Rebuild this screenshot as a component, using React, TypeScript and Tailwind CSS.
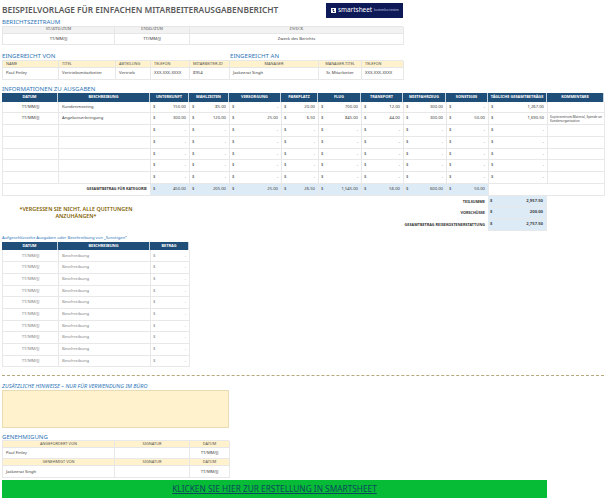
const labelCls = "text-[6.1px] leading-none text-[#2e75b6]"

const expenseCols = "grid-cols-[56px_92px_39px_40px_52px_37px_43px_42px_43px_42px_59px_57px]"

const expenseHead = [
  "DATUM",
  "BESCHREIBUNG",
  "UNTERKUNFT",
  "MAHLZEITEN",
  "VERSORGUNG",
  "PARKPLATZ",
  "FLUG",
  "TRANSPORT",
  "MIETFAHRZEUG",
  "SONSTIGES",
  "TÄGLICHE GESAMTBETRÄGE",
  "KOMMENTARE",
]

const expenseRows = [
  { date: "TT/MM/JJ", desc: "Kundenmeeting", vals: ["150.00", "85.00", "-", "20.00", "700.00", "12.00", "300.00", "-", "1,267.00"], note: "" },
  { date: "TT/MM/JJ", desc: "Angebotserbringung", vals: ["300.00", "120.00", "25.00", "6.50", "845.00", "44.00", "300.00", "50.00", "1,690.50"], note: "Kopierzentrum-Material, Spende an Kundenorganisation" },
  { date: "", desc: "", vals: ["-", "-", "-", "-", "-", "-", "-", "-", "-"], note: "" },
  { date: "", desc: "", vals: ["-", "-", "-", "-", "-", "-", "-", "-", "-"], note: "" },
  { date: "", desc: "", vals: ["-", "-", "-", "-", "-", "-", "-", "-", "-"], note: "" },
  { date: "", desc: "", vals: ["-", "-", "-", "-", "-", "-", "-", "-", "-"], note: "" },
  { date: "", desc: "", vals: ["-", "-", "-", "-", "-", "-", "-", "-", "-"], note: "" },
]

const categoryTotals = ["450.00", "205.00", "25.00", "26.50", "1,545.00", "56.00", "600.00", "50.00"]

const summary = [
  { label: "TEILSUMME", value: "2,957.50" },
  { label: "VORSCHÜSSE", value: "200.00" },
  { label: "GESAMTBETRAG REISEKOSTENERSTATTUNG", value: "2,757.50" },
]

function Money({ value, bold, tone }: { value: string; bold?: boolean; tone?: string }) {
  return (
    <div className={`flex items-center justify-between px-[2px] h-full border-r border-b border-[#e8e8e8] text-[4.2px] ${tone ?? ""} ${bold ? "font-bold" : ""}`}>
      <span>$</span>
      <span className="pr-[1px]">{value}</span>
    </div>
  )
}

function Title({ children, className }: { children: React.ReactNode; className?: string }) {
  return <div className={`${labelCls} ${className ?? ""}`}>{children}</div>
}

function HeadCell({ children, tone, align }: { children?: React.ReactNode; tone: string; align?: string }) {
  return (
    <div className={`flex items-center ${align ?? "justify-center"} h-full px-[3px] border-r border-b border-[#e6e6e6] text-[3.9px] text-[#555] whitespace-nowrap ${tone}`}>
      {children}
    </div>
  )
}

function BodyCell({ children, align }: { children?: React.ReactNode; align?: string }) {
  return (
    <div className={`flex items-center ${align ?? "justify-start"} h-full px-[3px] border-r border-b border-[#e8e8e8] text-[4.2px] text-[#404040] whitespace-nowrap`}>
      {children}
    </div>
  )
}

export default function App() {
  return (
    <div className="w-[608px] h-[502px] bg-white overflow-hidden font-['Noto_Sans','Open_Sans',sans-serif] text-[#404040]">
      <div className="pl-[2px] w-[604px]">
        <div className="flex items-start h-[19px]">
          <h1 className="w-[324px] pt-[5px] text-[8.35px] leading-[10px] font-semibold text-[#595959] whitespace-nowrap">
            BEISPIELVORLAGE FÜR EINFACHEN MITARBEITERAUSGABENBERICHT
          </h1>
          <div className="mt-[3px] flex items-center gap-[2px] w-[77px] h-[14.5px] pl-[5px] bg-[#0e1a58] text-white">
            <svg width="5" height="5" viewBox="0 0 5 5" className="shrink-0">
              <rect width="5" height="5" fill="#ffffff" />
              <path d="M1.5 1h1.5v1.5H1.5zM2 3h1.5v1H2z" fill="#0e1a58" />
            </svg>
            <span className="text-[6.4px] leading-none">smartsheet</span>
            <span className="text-[3.2px] leading-none text-[#c8cce0] whitespace-nowrap">kostenlos testen</span>
          </div>
        </div>

        <Title className="h-[7px]">BERICHTSZEITRAUM</Title>
        <div className="w-[401px] grid grid-cols-[112px_75px_214px] grid-rows-[6.5px_11.5px] border-l border-t border-[#e6e6e6]">
          <HeadCell tone="bg-[#f2f2f2] font-['Liberation_Serif',serif]">STARTDATUM</HeadCell>
          <HeadCell tone="bg-[#f2f2f2] font-['Liberation_Serif',serif]">ENDDATUM</HeadCell>
          <HeadCell tone="bg-[#f2f2f2] font-['Liberation_Serif',serif]">ZWECK</HeadCell>
          <BodyCell align="justify-center">TT/MM/JJ</BodyCell>
          <BodyCell align="justify-center">TT/MM/JJ</BodyCell>
          <BodyCell align="justify-center">Zweck des Berichts</BodyCell>
        </div>

        <div className="flex mt-[8px] h-[7px]">
          <Title className="w-[228px]">EINGEREICHT VON</Title>
          <Title>EINGEREICHT AN</Title>
        </div>
        <div className="w-[401px] grid grid-cols-[56px_57px_35px_39px_40px_89px_43px_42px] grid-rows-[6.5px_12px] border-l border-t border-[#e8e8e8]">
          <HeadCell tone="bg-[#fff2cc]" align="justify-start">NAME</HeadCell>
          <HeadCell tone="bg-[#fff2cc]" align="justify-start">TITEL</HeadCell>
          <HeadCell tone="bg-[#fff2cc]" align="justify-start">ABTEILUNG</HeadCell>
          <HeadCell tone="bg-[#fff2cc]" align="justify-start">TELEFON</HeadCell>
          <HeadCell tone="bg-[#fff2cc]" align="justify-start">MITARBEITER-ID</HeadCell>
          <HeadCell tone="bg-[#fff2cc]">MANAGER</HeadCell>
          <HeadCell tone="bg-[#fff2cc]">MANAGER-TITEL</HeadCell>
          <HeadCell tone="bg-[#fff2cc]" align="justify-start">TELEFON</HeadCell>
          <BodyCell>Paul Finley</BodyCell>
          <BodyCell>Vertriebsmitarbeiter</BodyCell>
          <BodyCell>Vertrieb</BodyCell>
          <BodyCell>XXX-XXX-XXXX</BodyCell>
          <BodyCell>8954</BodyCell>
          <BodyCell>Jaskeerat Singh</BodyCell>
          <BodyCell align="justify-center">Sr. Mitarbeiter</BodyCell>
          <BodyCell>XXX-XXX-XXXX</BodyCell>
        </div>

        <Title className="mt-[6.5px] h-[6.5px]">INFORMATIONEN ZU AUSGABEN</Title>
        <div className={`grid ${expenseCols} h-[9px]`}>
          {expenseHead.map((h) => (
            <div key={h} className="flex items-center justify-center bg-[#1f4e78] border-r border-[#c5d3e0] text-[3.9px] font-bold text-white whitespace-nowrap">
              {h}
            </div>
          ))}
        </div>
        {expenseRows.map((row, i) => (
          <div key={i} className={`grid ${expenseCols} h-[11.75px] border-l border-[#e8e8e8]`}>
            <BodyCell align="justify-center">{row.date}</BodyCell>
            <BodyCell>{row.desc}</BodyCell>
            {row.vals.map((v, j) => (
              <Money key={j} value={v} />
            ))}
            <div className="flex items-center h-full px-[2px] border-r border-b border-[#e8e8e8] text-[3.1px] leading-[4px]">
              {row.note}
            </div>
          </div>
        ))}
        <div className={`grid ${expenseCols} h-[11.75px] border-l border-[#e8e8e8]`}>
          <div className="col-span-2 flex items-center justify-end h-full pr-[3px] border-r border-b border-[#e8e8e8] text-[3.8px] font-bold text-[#333]">
            GESAMTBETRAG FÜR KATEGORIE
          </div>
          {categoryTotals.map((v, j) => (
            <Money key={j} value={v} tone="bg-[#ddebf7]" />
          ))}
          <div className="col-span-2 h-full border-r border-b border-[#e8e8e8]" />
        </div>

        <div className="flex h-[35px]">
          <div className="w-[148px] pt-[10px] text-center text-[5.4px] leading-[7px] font-semibold text-[#7f6000]">
            *VERGESSEN SIE NICHT, ALLE QUITTUNGEN ANZUHÄNGEN*
          </div>
          <div className="w-[338px] pr-[3px]">
            {summary.map((s) => (
              <div key={s.label} className="flex items-center justify-end h-[11.75px] text-[3.8px] font-bold text-[#333]">
                {s.label}
              </div>
            ))}
          </div>
          <div className="w-[59px]">
            {summary.map((s) => (
              <div key={s.label} className="h-[11.75px]">
                <Money value={s.value} bold tone="bg-[#ddebf7]" />
              </div>
            ))}
          </div>
        </div>

        <div className="h-[11.7px] pt-[4px] text-[4.2px] leading-[5px] text-[#2e75b6]">
          Aufgeschlüsselte Ausgaben oder Beschreibung von „Sonstigen“
        </div>
        <div className="w-[187px]">
          <div className="grid grid-cols-[56px_92px_39px] h-[8.3px]">
            {["DATUM", "BESCHREIBUNG", "BETRAG"].map((h) => (
              <div key={h} className="flex items-center justify-center bg-[#1f4e78] border-r border-[#c5d3e0] text-[3.9px] font-bold text-white">
                {h}
              </div>
            ))}
          </div>
          {Array.from({ length: 10 }).map((_, i) => (
            <div key={i} className="grid grid-cols-[56px_92px_39px] h-[11.7px] border-l border-[#e8e8e8] text-[#7f7f7f]">
              <div className="flex items-center justify-center border-r border-b border-[#e8e8e8] text-[4.2px]">TT/MM/JJ</div>
              <div className="flex items-center px-[3px] border-r border-b border-[#e8e8e8] text-[4.2px]">Beschreibung</div>
              <Money value="-" />
            </div>
          ))}
        </div>

        <div className="mt-[8px] border-t border-dashed border-[#b5a87c]" />
        <div className="mt-[8px] h-[6px] text-[5.5px] leading-[5px] italic text-[#2e75b6]">
          ZUSÄTZLICHE HINWEISE – NUR FÜR VERWENDUNG IM BÜRO
        </div>
        <div className="w-[227px] h-[38px] bg-[#fff2cc] border border-[#e8dcb4]" />

        <Title className="mt-[6px] h-[6px]">GENEHMIGUNG</Title>
        <div className="w-[227px] grid grid-cols-[112px_75px_40px] grid-rows-[7px_11px_7px_12px] border-l border-t border-[#e8e8e8]">
          <HeadCell tone="bg-[#fff2cc]">ANGEFORDERT VON</HeadCell>
          <HeadCell tone="bg-[#fff2cc]">SIGNATUR</HeadCell>
          <HeadCell tone="bg-[#fff2cc]">DATUM</HeadCell>
          <BodyCell>Paul Finley</BodyCell>
          <BodyCell />
          <BodyCell align="justify-center">TT/MM/JJ</BodyCell>
          <HeadCell tone="bg-[#fff2cc]">GENEHMIGT VON</HeadCell>
          <HeadCell tone="bg-[#fff2cc]">SIGNATUR</HeadCell>
          <HeadCell tone="bg-[#fff2cc]">DATUM</HeadCell>
          <BodyCell>Jaskeerat Singh</BodyCell>
          <BodyCell />
          <BodyCell align="justify-center">TT/MM/JJ</BodyCell>
        </div>

        <a className="mt-[2px] flex items-center justify-center w-[545px] h-[18px] bg-[#06bb36] text-[8.3px] underline text-[#0b4a5c]">
          KLICKEN SIE HIER ZUR ERSTELLUNG IN SMARTSHEET
        </a>
      </div>
    </div>
  )
}
